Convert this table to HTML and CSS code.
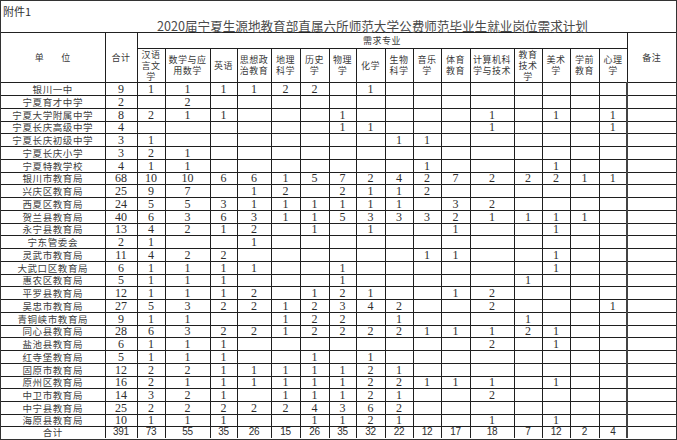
FILE: index.html
```html
<!DOCTYPE html>
<html lang="zh-CN">
<head>
<meta charset="utf-8">
<title>2020届宁夏生源地公费师范毕业生就业岗位需求计划</title>
<link rel="stylesheet" href="styles.css">
</head>
<body>
<div class="sheet">
  <div class="annex">附件1</div>
  <div class="title">2020届宁夏生源地教育部直属六所师范大学公费师范毕业生就业岗位需求计划</div>
  <table class="plan">
    <colgroup>
      <col class="c-unit"><col class="c-sum"><col class="c-28"><col class="c-45"><col class="c-27"><col class="c-34"><col class="c-29"><col class="c-29"><col class="c-27"><col class="c-29"><col class="c-28"><col class="c-28"><col class="c-29"><col class="c-44"><col class="c-28"><col class="c-28"><col class="c-29"><col class="c-28"><col class="c-note">
    </colgroup>
    <thead>
      <tr class="h1">
        <th rowspan="2" class="unit-h"><span>单</span><span>位</span></th>
        <th rowspan="2" class="sum-h">合计</th>
        <th colspan="16" class="group-h">需求专业</th>
        <th rowspan="2" class="note-h">备注</th>
      </tr>
      <tr class="h2">
        <th>汉语<br>言文<br>学</th>
        <th>数学与应<br>用数学</th>
        <th>英语</th>
        <th>思想政<br>治教育</th>
        <th>地理<br>科学</th>
        <th>历史<br>学</th>
        <th>物理<br>学</th>
        <th>化学</th>
        <th>生物<br>科学</th>
        <th>音乐<br>学</th>
        <th>体育<br>教育</th>
        <th>计算机科<br>学与技术</th>
        <th>教育<br>技术<br>学</th>
        <th>美术<br>学</th>
        <th>学前<br>教育</th>
        <th>心理<br>学</th>
      </tr>
    </thead>
    <tbody>
      <tr><td class="unit">银川一中</td><td>9</td><td>1</td><td>1</td><td>1</td><td>1</td><td>2</td><td>2</td><td></td><td>1</td><td></td><td></td><td></td><td></td><td></td><td></td><td></td><td></td><td class="note"></td></tr>
      <tr><td class="unit">宁夏育才中学</td><td>2</td><td></td><td>2</td><td></td><td></td><td></td><td></td><td></td><td></td><td></td><td></td><td></td><td></td><td></td><td></td><td></td><td></td><td class="note"></td></tr>
      <tr><td class="unit">宁夏大学附属中学</td><td>8</td><td>2</td><td>1</td><td>1</td><td></td><td></td><td></td><td>1</td><td></td><td></td><td></td><td></td><td>1</td><td></td><td>1</td><td></td><td>1</td><td class="note"></td></tr>
      <tr><td class="unit">宁夏长庆高级中学</td><td>4</td><td></td><td></td><td></td><td></td><td></td><td></td><td>1</td><td>1</td><td></td><td></td><td></td><td>1</td><td></td><td></td><td></td><td>1</td><td class="note"></td></tr>
      <tr><td class="unit">宁夏长庆初级中学</td><td>3</td><td>1</td><td></td><td></td><td></td><td></td><td></td><td></td><td></td><td>1</td><td>1</td><td></td><td></td><td></td><td></td><td></td><td></td><td class="note"></td></tr>
      <tr><td class="unit">宁夏长庆小学</td><td>3</td><td>2</td><td>1</td><td></td><td></td><td></td><td></td><td></td><td></td><td></td><td></td><td></td><td></td><td></td><td></td><td></td><td></td><td class="note"></td></tr>
      <tr><td class="unit">宁夏特教学校</td><td>4</td><td>1</td><td>1</td><td></td><td></td><td></td><td></td><td></td><td></td><td></td><td>1</td><td></td><td></td><td></td><td>1</td><td></td><td></td><td class="note"></td></tr>
      <tr><td class="unit">银川市教育局</td><td>68</td><td>10</td><td>10</td><td>6</td><td>6</td><td>1</td><td>5</td><td>7</td><td>2</td><td>4</td><td>2</td><td>7</td><td>2</td><td>2</td><td>2</td><td>1</td><td>1</td><td class="note"></td></tr>
      <tr><td class="unit">兴庆区教育局</td><td>25</td><td>9</td><td>7</td><td></td><td>1</td><td>2</td><td></td><td>2</td><td>1</td><td>1</td><td>2</td><td></td><td></td><td></td><td></td><td></td><td></td><td class="note"></td></tr>
      <tr><td class="unit">西夏区教育局</td><td>24</td><td>5</td><td>5</td><td>3</td><td>1</td><td>1</td><td>1</td><td>1</td><td>1</td><td>1</td><td></td><td>3</td><td>2</td><td></td><td></td><td></td><td></td><td class="note"></td></tr>
      <tr><td class="unit">贺兰县教育局</td><td>40</td><td>6</td><td>3</td><td>6</td><td>3</td><td>1</td><td>1</td><td>5</td><td>3</td><td>3</td><td>3</td><td>2</td><td>1</td><td>1</td><td>1</td><td>1</td><td></td><td class="note"></td></tr>
      <tr><td class="unit">永宁县教育局</td><td>13</td><td>4</td><td>2</td><td>1</td><td>2</td><td></td><td>1</td><td></td><td>1</td><td></td><td></td><td>1</td><td></td><td></td><td>1</td><td></td><td></td><td class="note"></td></tr>
      <tr><td class="unit">宁东管委会</td><td>2</td><td>1</td><td></td><td></td><td>1</td><td></td><td></td><td></td><td></td><td></td><td></td><td></td><td></td><td></td><td></td><td></td><td></td><td class="note"></td></tr>
      <tr><td class="unit">灵武市教育局</td><td>11</td><td>4</td><td>2</td><td>2</td><td></td><td></td><td></td><td></td><td></td><td></td><td>1</td><td>1</td><td></td><td></td><td>1</td><td></td><td></td><td class="note"></td></tr>
      <tr><td class="unit">大武口区教育局</td><td>6</td><td>1</td><td>1</td><td>1</td><td>1</td><td></td><td></td><td>1</td><td></td><td></td><td></td><td></td><td></td><td></td><td>1</td><td></td><td></td><td class="note"></td></tr>
      <tr><td class="unit">惠农区教育局</td><td>5</td><td>1</td><td>1</td><td>1</td><td></td><td></td><td></td><td>1</td><td></td><td></td><td></td><td></td><td></td><td>1</td><td></td><td></td><td></td><td class="note"></td></tr>
      <tr><td class="unit">平罗县教育局</td><td>12</td><td>1</td><td>1</td><td>1</td><td>2</td><td></td><td>1</td><td>2</td><td>1</td><td></td><td></td><td>1</td><td>2</td><td></td><td></td><td></td><td></td><td class="note"></td></tr>
      <tr><td class="unit">吴忠市教育局</td><td>27</td><td>5</td><td>3</td><td>2</td><td>2</td><td>1</td><td>2</td><td>3</td><td>4</td><td>2</td><td></td><td></td><td>2</td><td></td><td></td><td></td><td>1</td><td class="note"></td></tr>
      <tr><td class="unit">青铜峡市教育局</td><td>9</td><td>1</td><td>1</td><td></td><td></td><td>1</td><td>2</td><td>2</td><td></td><td>1</td><td></td><td></td><td></td><td>1</td><td></td><td></td><td></td><td class="note"></td></tr>
      <tr><td class="unit">同心县教育局</td><td>28</td><td>6</td><td>3</td><td>2</td><td>2</td><td>1</td><td>2</td><td>2</td><td>2</td><td>2</td><td>1</td><td>1</td><td>1</td><td>2</td><td>1</td><td></td><td></td><td class="note"></td></tr>
      <tr><td class="unit">盐池县教育局</td><td>6</td><td>1</td><td>1</td><td>1</td><td></td><td></td><td></td><td></td><td></td><td></td><td></td><td></td><td>2</td><td></td><td>1</td><td></td><td></td><td class="note"></td></tr>
      <tr><td class="unit">红寺堡教育局</td><td>5</td><td>1</td><td>1</td><td>1</td><td></td><td></td><td>1</td><td></td><td>1</td><td></td><td></td><td></td><td></td><td></td><td></td><td></td><td></td><td class="note"></td></tr>
      <tr><td class="unit">固原市教育局</td><td>12</td><td>2</td><td>2</td><td>1</td><td>1</td><td>1</td><td>1</td><td>1</td><td>2</td><td>1</td><td></td><td></td><td></td><td></td><td></td><td></td><td></td><td class="note"></td></tr>
      <tr><td class="unit">原州区教育局</td><td>16</td><td>2</td><td>1</td><td>1</td><td>1</td><td>1</td><td>1</td><td>1</td><td>2</td><td>2</td><td>1</td><td>1</td><td>1</td><td></td><td>1</td><td></td><td></td><td class="note"></td></tr>
      <tr><td class="unit">中卫市教育局</td><td>14</td><td>3</td><td>2</td><td>1</td><td></td><td>1</td><td>1</td><td>1</td><td>2</td><td>1</td><td></td><td></td><td>2</td><td></td><td></td><td></td><td></td><td class="note"></td></tr>
      <tr><td class="unit">中宁县教育局</td><td>25</td><td>2</td><td>2</td><td>2</td><td>2</td><td>2</td><td>4</td><td>3</td><td>6</td><td>2</td><td></td><td></td><td></td><td></td><td></td><td></td><td></td><td class="note"></td></tr>
      <tr><td class="unit">海原县教育局</td><td>10</td><td>1</td><td>1</td><td>1</td><td></td><td></td><td>1</td><td>1</td><td>2</td><td>1</td><td></td><td></td><td>1</td><td></td><td>1</td><td></td><td></td><td class="note"></td></tr>
      <tr class="total"><td class="unit">合计</td><td>391</td><td>73</td><td>55</td><td>35</td><td>26</td><td>15</td><td>26</td><td>35</td><td>32</td><td>22</td><td>12</td><td>17</td><td>18</td><td>7</td><td>12</td><td>2</td><td>4</td><td class="note"></td></tr>
    </tbody>
  </table>
</div>
</body>
</html>
```

FILE: styles.css
```css
html, body {
  margin: 0;
  padding: 0;
  background: #ffffff;
}

.sheet {
  width: 677px;
  height: 440px;
  box-sizing: border-box;
  border: 1px solid #333333;
  overflow: hidden;
  color: #2b2b2b;
  font-family: "Noto Sans CJK SC", "Noto Sans", sans-serif;
}

.annex {
  height: 18px;
  line-height: 20px;
  font-size: 11px;
  padding-left: 2px;
  color: #333333;
}

.title {
  height: 13px;
  line-height: 13px;
  font-size: 12.6px;
  padding-left: 156px;
  border-bottom: 1px solid #222222;
  color: #4a4a4a;
  white-space: nowrap;
}

.plan {
  width: 675px;
  table-layout: fixed;
  border-collapse: collapse;
  border-style: hidden;
}

.c-unit { width: 104px; }
.c-sum { width: 32px; }
.c-27 { width: 27px; }
.c-28 { width: 28px; }
.c-29 { width: 29px; }
.c-34 { width: 34px; }
.c-44 { width: 44px; }
.c-45 { width: 45px; }
.c-note { width: 49px; }

.plan th,
.plan td {
  border: 1px solid #1f1f1f;
  padding: 0;
  text-align: center;
  vertical-align: middle;
  white-space: nowrap;
}

.plan th {
  font-weight: normal;
  font-size: 9px;
  line-height: 11px;
  letter-spacing: 0.5px;
  color: #383838;
}

.h1 { height: 15px; }
.h2 { height: 34px; }

.unit-h span + span {
  margin-left: 17px;
}

.sum-h {
  font-size: 10px;
}

.group-h {
  font-size: 10.5px;
  line-height: 12px;
}

.plan tbody tr {
  height: 13px;
}

.plan tbody tr:nth-child(4n) {
  height: 12px;
}

.plan tbody tr:nth-child(27) {
  height: 12px;
}

.plan td {
  font-family: "Liberation Serif", serif;
  font-size: 12px;
  line-height: 10px;
  color: #2e2e2e;
}

.plan td.unit {
  font-family: "Noto Sans CJK SC", sans-serif;
  font-size: 9.5px;
  letter-spacing: 0.6px;
  color: #404040;
}

.plan tbody td.note {
  border-left: 2px solid #444444;
}

.plan tr.total td {
  font-family: "Liberation Sans Narrow", "Liberation Sans", sans-serif;
  font-stretch: condensed;
  font-size: 10px;
  letter-spacing: -0.3px;
}

.plan tr.total td.unit {
  font-family: "Noto Sans CJK SC", sans-serif;
  font-size: 9.5px;
  letter-spacing: 0.5px;
}
```
